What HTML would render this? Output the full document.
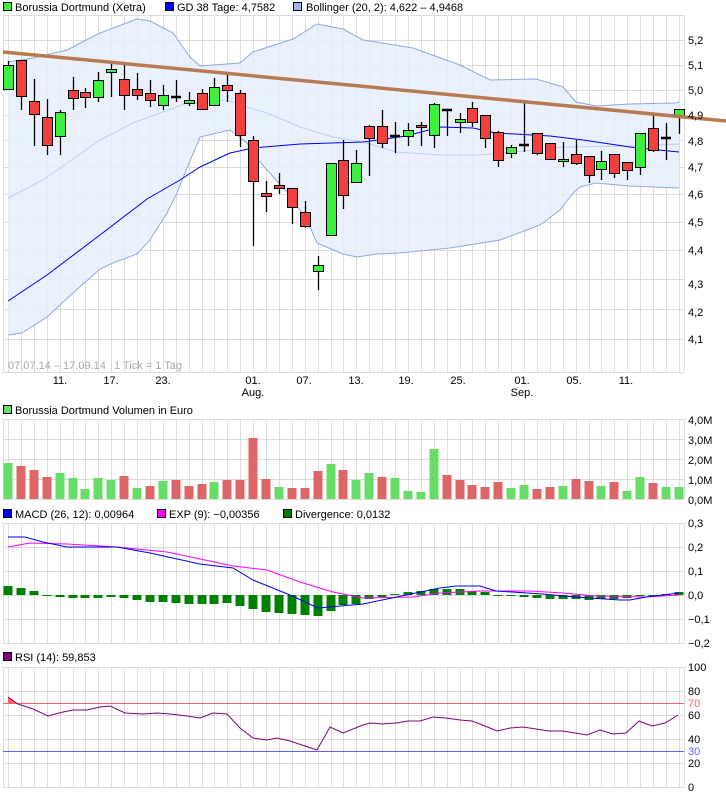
<!DOCTYPE html>
<html><head><meta charset="utf-8"><style>
body{margin:0;background:#fff;width:726px;height:796px;overflow:hidden}
svg{display:block}
text{font-family:"Liberation Sans",sans-serif;font-size:11px;fill:#000}
</style></head><body>
<svg width="726" height="796" viewBox="0 0 726 796" xmlns="http://www.w3.org/2000/svg">
<defs>
<g id="vg" stroke="#dcdcdc" stroke-width="1">
<path d="M8.5 0V1M21.5 0V1M34.5 0V1M47.5 0V1M60.5 0V1M73.5 0V1M85.5 0V1M98.5 0V1M111.5 0V1M124.5 0V1M137.5 0V1M150.5 0V1M163.5 0V1M176.5 0V1M189.5 0V1M202.5 0V1M214.5 0V1M227.5 0V1M240.5 0V1M253.5 0V1M266.5 0V1M279.5 0V1M292.5 0V1M305.5 0V1M318.5 0V1M331.5 0V1M343.5 0V1M356.5 0V1M369.5 0V1M382.5 0V1M395.5 0V1M408.5 0V1M421.5 0V1M434.5 0V1M447.5 0V1M460.5 0V1M472.5 0V1M485.5 0V1M498.5 0V1M511.5 0V1M524.5 0V1M537.5 0V1M550.5 0V1M563.5 0V1M576.5 0V1M589.5 0V1M601.5 0V1M614.5 0V1M627.5 0V1M640.5 0V1M653.5 0V1M666.5 0V1M679.5 0V1M3.5 0V1M684.5 0V1"/>
</g>
</defs>

<rect x="3.5" y="2.5" width="8" height="8" fill="#3ef03e" stroke="#000"/>
<text x="15" y="11">Borussia Dortmund (Xetra)</text>
<rect x="165.5" y="2.5" width="8" height="8" fill="#0000ff" stroke="#000"/>
<text x="177" y="11">GD 38 Tage: 4,7582</text>
<rect x="293.5" y="2.5" width="8" height="8" fill="#9db4e6" stroke="#000"/>
<text x="306" y="11">Bollinger (20, 2): 4,622 – 4,9468</text>

<use href="#vg" transform="translate(0,15) scale(1,357)"/>
<g stroke="#dcdcdc"><path d="M3 15.5H684M3 40.5H684M3 65.5H684M3 90.5H684M3 115.5H684M3 140.5H684M3 167.5H684M3 194.5H684M3 222.5H684M3 250.5H684M3 279.5H684M3 309.5H684M3 339.5H684M3 372.5H684"/></g>

<path fill="#e6eefb" fill-opacity="0.85" d="M8 62 L33 58 L67 50 L100 33 L137 19 L150 21 L173 33 L190 57 L200 66 L240 63 L253 52 L293 39 L317 24 L343 29 L363 40 L413 48 L460 65 L490 80 L536 79 L563 87 L576 102 L596 106 L630 104 L676 103 L679 102 L679 188 L630 186 L596 183 L580 187 L573 193 L560 210 L540 225 L500 240 L450 248 L400 253 L377 254 L357 257 L343 254 L317 243 L310 227 L300 210 L287 192 L258 160 L247 143 L230 130 L200 137 L182 180 L177 193 L167 213 L150 240 L137 254 L113 263 L100 269 L73 293 L47 317 L22 333 L8 335 Z"/>
<path fill="none" stroke="#8fa8e0" d="M8 62 L33 58 L67 50 L100 33 L137 19 L150 21 L173 33 L190 57 L200 66 L240 63 L253 52 L293 39 L317 24 L343 29 L363 40 L413 48 L460 65 L490 80 L536 79 L563 87 L576 102 L596 106 L630 104 L676 103 L679 102"/>
<path fill="none" stroke="#8fa8e0" d="M679 188 L630 186 L596 183 L580 187 L573 193 L560 210 L540 225 L500 240 L450 248 L400 253 L377 254 L357 257 L343 254 L317 243 L310 227 L300 210 L287 192 L258 160 L247 143 L230 130 L200 137 L182 180 L177 193 L167 213 L150 240 L137 254 L113 263 L100 269 L73 293 L47 317 L22 333 L8 335"/>
<path fill="none" stroke="#b9cff7" d="M8 198 L43 180 L100 140 L133 123 L187 103 L227 100 L247 107 L267 113 L300 127 L333 137 L363 142 L396 152 L440 155 L480 155 L513 152 L563 147 L630 146 L679 144"/>
<path fill="none" stroke="#0000ee" d="M8 301 L47 275 L100 235 L147 199 L180 180 L200 167 L230 153 L253 148 L300 144 L363 142 L406 136 L440 127 L473 128 L496 133 L550 136 L583 140 L630 147 L679 152"/>

<g stroke="#000" stroke-width="1.3">
<path d="M8.5 61V89M21.5 60V110M34.5 79V146M47.5 99V155M60.5 110V155M73.5 77V110M85.5 88V108M98.5 72V102M111.5 62V97M124.5 65V110M137.5 73V100M150.5 80V107M163.5 85V110M176.5 80V102M189.5 92V106M202.5 89V109M214.5 78V106M227.5 75V102M240.5 90V147M253.5 136V246M266.5 181V212M279.5 173V194M292.5 188V224M305.5 201V228M318.5 256V290M331.5 163V235M343.5 140V209M356.5 150V182M369.5 125V176M382.5 110V148M395.5 122V153M408.5 123V146M421.5 122V146M434.5 103V148M447.5 110V136M460.5 113V133M472.5 102V127M485.5 115V148M498.5 131V167M511.5 145V158M524.5 103V152M537.5 133V155M550.5 143V160M563.5 142V167M576.5 140V165M589.5 156V183M601.5 151V180M614.5 154V178M627.5 162V180M640.5 133V175M653.5 114V152M666.5 123V160M679.5 109V134"/>
</g>
<g stroke="#000" stroke-width="1">
<g fill="#3ef03e">
<rect x="3.5" y="65.5" width="10" height="24"/>
<rect x="55.5" y="112.5" width="10" height="24"/>
<rect x="93.5" y="80.5" width="10" height="17"/>
<rect x="106.5" y="69.5" width="10" height="3"/>
<rect x="158.5" y="95.5" width="10" height="10"/>
<rect x="184.5" y="100.5" width="10" height="3"/>
<rect x="209.5" y="87.5" width="10" height="18"/>
<rect x="313.5" y="265.5" width="10" height="6"/>
<rect x="326.5" y="163.5" width="10" height="72"/>
<rect x="351.5" y="163.5" width="10" height="19"/>
<rect x="403.5" y="130.5" width="10" height="6"/>
<rect x="429.5" y="104.5" width="10" height="31"/>
<rect x="455.5" y="119.5" width="10" height="3"/>
<rect x="506.5" y="147.5" width="10" height="6"/>
<rect x="558.5" y="159.5" width="10" height="2"/>
<rect x="596.5" y="161.5" width="10" height="8"/>
<rect x="635.5" y="133.5" width="10" height="34"/>
<rect x="674.5" y="109.5" width="10" height="7"/>
</g>
<g fill="#f04040">
<rect x="16.5" y="60.5" width="10" height="36"/>
<rect x="29.5" y="101.5" width="10" height="13"/>
<rect x="42.5" y="117.5" width="10" height="28"/>
<rect x="68.5" y="90.5" width="10" height="8"/>
<rect x="80.5" y="92.5" width="10" height="5"/>
<rect x="119.5" y="79.5" width="10" height="16"/>
<rect x="132.5" y="89.5" width="10" height="6"/>
<rect x="145.5" y="93.5" width="10" height="7"/>
<rect x="197.5" y="93.5" width="10" height="16"/>
<rect x="222.5" y="85.5" width="10" height="5"/>
<rect x="235.5" y="93.5" width="10" height="42"/>
<rect x="248.5" y="140.5" width="10" height="41"/>
<rect x="261.5" y="193.5" width="10" height="3"/>
<rect x="274.5" y="185.5" width="10" height="3"/>
<rect x="287.5" y="188.5" width="10" height="19"/>
<rect x="300.5" y="212.5" width="10" height="14"/>
<rect x="338.5" y="160.5" width="10" height="35"/>
<rect x="364.5" y="126.5" width="10" height="12"/>
<rect x="377.5" y="126.5" width="10" height="17"/>
<rect x="416.5" y="125.5" width="10" height="2"/>
<rect x="467.5" y="108.5" width="10" height="14"/>
<rect x="480.5" y="115.5" width="10" height="23"/>
<rect x="493.5" y="132.5" width="10" height="28"/>
<rect x="532.5" y="133.5" width="10" height="20"/>
<rect x="545.5" y="143.5" width="10" height="16"/>
<rect x="571.5" y="154.5" width="10" height="9"/>
<rect x="584.5" y="156.5" width="10" height="19"/>
<rect x="609.5" y="154.5" width="10" height="19"/>
<rect x="622.5" y="162.5" width="10" height="8"/>
<rect x="648.5" y="128.5" width="10" height="22"/>
</g>
</g>
<g stroke="#000" stroke-width="2.5"><path d="M171 97H181M390 136H400M442 110H452M519 145H529M661 138H671"/></g>

<path d="M3 52 L726 121" stroke="#b97a52" stroke-width="3.5" fill="none"/>

<text x="8" y="369" style="fill:#a8a8a8">07.07.14 – 17.09.14</text>
<text x="114" y="369" style="fill:#a8a8a8">1 Tick = 1 Tag</text>
<g text-anchor="middle">
<text x="60" y="384">11.</text><text x="111" y="384">17.</text><text x="163" y="384">23.</text>
<text x="253" y="384">01.</text><text x="253" y="396">Aug.</text>
<text x="304" y="384">07.</text><text x="356" y="384">13.</text><text x="406" y="384">19.</text>
<text x="458" y="384">25.</text><text x="522" y="384">01.</text><text x="522" y="396">Sep.</text>
<text x="574" y="384">05.</text><text x="626" y="384">11.</text>
</g>
<g>
<text x="688" y="44">5,2</text><text x="688" y="69">5,1</text><text x="688" y="94">5,0</text>
<text x="688" y="119">4,9</text><text x="688" y="145">4,8</text><text x="688" y="171">4,7</text>
<text x="688" y="198">4,6</text><text x="688" y="226">4,5</text><text x="688" y="254">4,4</text>
<text x="688" y="288">4,3</text><text x="688" y="316">4,2</text><text x="688" y="343">4,1</text>
</g>

<rect x="3.5" y="405.5" width="8" height="8" fill="#66dd66" stroke="#000"/>
<text x="15" y="414">Borussia Dortmund Volumen in Euro</text>
<use href="#vg" transform="translate(0,419) scale(1,80)"/>
<g stroke="#dcdcdc"><path d="M3 419.5H684M3 439.5H684M3 459.5H684M3 479.5H684M3 499.5H684"/></g>
<g fill="#66dd66">
<rect x="3.5" y="463" width="9" height="36"/><rect x="55.5" y="473" width="9" height="26"/><rect x="68.5" y="478" width="9" height="21"/><rect x="80.5" y="489" width="9" height="10"/><rect x="93.5" y="478" width="9" height="21"/><rect x="106.5" y="480" width="9" height="19"/><rect x="132.5" y="488" width="9" height="11"/><rect x="158.5" y="481" width="9" height="18"/><rect x="209.5" y="482" width="9" height="17"/><rect x="274.5" y="487" width="9" height="12"/><rect x="326.5" y="464" width="9" height="35"/><rect x="351.5" y="480" width="9" height="19"/><rect x="364.5" y="473" width="9" height="26"/><rect x="390.5" y="478" width="9" height="21"/><rect x="403.5" y="491" width="9" height="8"/><rect x="416.5" y="492" width="9" height="7"/><rect x="429.5" y="449" width="9" height="50"/><rect x="506.5" y="488" width="9" height="11"/><rect x="519.5" y="485" width="9" height="14"/><rect x="558.5" y="486" width="9" height="13"/><rect x="596.5" y="486" width="9" height="13"/><rect x="622.5" y="491" width="9" height="8"/><rect x="635.5" y="477" width="9" height="22"/><rect x="661.5" y="487" width="9" height="12"/><rect x="674.5" y="487" width="9" height="12"/>
</g>
<g fill="#dd6666">
<rect x="16.5" y="466" width="9" height="33"/><rect x="29.5" y="470" width="9" height="29"/><rect x="42.5" y="477" width="9" height="22"/><rect x="119.5" y="476" width="9" height="23"/><rect x="145.5" y="486" width="9" height="13"/><rect x="171.5" y="480" width="9" height="19"/><rect x="184.5" y="486" width="9" height="13"/><rect x="197.5" y="484" width="9" height="15"/><rect x="222.5" y="480" width="9" height="19"/><rect x="235.5" y="480" width="9" height="19"/><rect x="248.5" y="438" width="9" height="61"/><rect x="261.5" y="479" width="9" height="20"/><rect x="287.5" y="488" width="9" height="11"/><rect x="300.5" y="488" width="9" height="11"/><rect x="313.5" y="471" width="9" height="28"/><rect x="338.5" y="470" width="9" height="29"/><rect x="377.5" y="477" width="9" height="22"/><rect x="442.5" y="475" width="9" height="24"/><rect x="455.5" y="480" width="9" height="19"/><rect x="467.5" y="485" width="9" height="14"/><rect x="480.5" y="487" width="9" height="12"/><rect x="493.5" y="482" width="9" height="17"/><rect x="532.5" y="489" width="9" height="10"/><rect x="545.5" y="487" width="9" height="12"/><rect x="571.5" y="479" width="9" height="20"/><rect x="584.5" y="481" width="9" height="18"/><rect x="609.5" y="482" width="9" height="17"/><rect x="648.5" y="483" width="9" height="16"/>
</g>
<g><text x="688" y="424">4,0M</text><text x="688" y="444">3,0M</text><text x="688" y="464">2,0M</text><text x="688" y="484">1,0M</text><text x="688" y="504">0,0M</text></g>

<rect x="3.5" y="509.5" width="8" height="8" fill="#0000ff" stroke="#000"/>
<text x="15" y="518">MACD (26, 12): 0,00964</text>
<rect x="157.5" y="509.5" width="8" height="8" fill="#ff00ff" stroke="#000"/>
<text x="169" y="518">EXP (9): −0,00356</text>
<rect x="283.5" y="509.5" width="8" height="8" fill="#008000" stroke="#000"/>
<text x="295" y="518">Divergence: 0,0132</text>
<use href="#vg" transform="translate(0,523) scale(1,120)"/>
<g stroke="#dcdcdc"><path d="M3 523.5H684M3 547.5H684M3 571.5H684M3 595.5H684M3 619.5H684M3 643.5H684"/></g>
<g fill="#008000">
<rect x="3.5" y="586" width="9" height="9"/><rect x="16.5" y="588" width="9" height="7"/><rect x="29.5" y="591" width="9" height="4"/><rect x="42.5" y="595" width="9" height="1"/><rect x="55.5" y="595" width="9" height="2"/><rect x="68.5" y="595" width="9" height="3"/><rect x="80.5" y="595" width="9" height="3"/><rect x="93.5" y="595" width="9" height="3"/><rect x="106.5" y="595" width="9" height="2"/><rect x="119.5" y="595" width="9" height="3"/><rect x="132.5" y="595" width="9" height="5"/><rect x="145.5" y="595" width="9" height="7"/><rect x="158.5" y="595" width="9" height="7"/><rect x="171.5" y="595" width="9" height="8"/><rect x="184.5" y="595" width="9" height="9"/><rect x="197.5" y="595" width="9" height="9"/><rect x="209.5" y="595" width="9" height="9"/><rect x="222.5" y="595" width="9" height="8"/><rect x="235.5" y="595" width="9" height="11"/><rect x="248.5" y="595" width="9" height="14"/><rect x="261.5" y="595" width="9" height="17"/><rect x="274.5" y="595" width="9" height="18"/><rect x="287.5" y="595" width="9" height="19"/><rect x="300.5" y="595" width="9" height="20"/><rect x="313.5" y="595" width="9" height="21"/><rect x="326.5" y="595" width="9" height="16"/><rect x="338.5" y="595" width="9" height="10"/><rect x="351.5" y="595" width="9" height="9"/><rect x="364.5" y="595" width="9" height="4"/><rect x="377.5" y="595" width="9" height="2"/><rect x="390.5" y="594" width="9" height="1"/><rect x="403.5" y="592" width="9" height="3"/><rect x="416.5" y="591" width="9" height="4"/><rect x="429.5" y="589" width="9" height="6"/><rect x="442.5" y="589" width="9" height="6"/><rect x="455.5" y="589" width="9" height="6"/><rect x="467.5" y="591" width="9" height="4"/><rect x="480.5" y="592" width="9" height="3"/><rect x="493.5" y="595" width="9" height="1"/><rect x="506.5" y="595" width="9" height="1"/><rect x="519.5" y="595" width="9" height="2"/><rect x="532.5" y="595" width="9" height="3"/><rect x="545.5" y="595" width="9" height="4"/><rect x="558.5" y="595" width="9" height="4"/><rect x="571.5" y="595" width="9" height="4"/><rect x="584.5" y="595" width="9" height="5"/><rect x="596.5" y="595" width="9" height="4"/><rect x="609.5" y="595" width="9" height="4"/><rect x="622.5" y="595" width="9" height="3"/><rect x="635.5" y="595" width="9" height="1"/><rect x="648.5" y="595" width="9" height="1"/><rect x="661.5" y="594" width="9" height="1"/><rect x="674.5" y="592" width="9" height="3"/>
</g>
<path fill="none" stroke="#ff00ff" d="M8 547 L30 543 L67 544 L117 547 L167 552 L233 566 L267 570 L300 582 L333 592 L363 598 L413 597 L440 593 L480 591 L530 591 L563 593 L596 596 L646 597 L679 595"/>
<path fill="none" stroke="#0000ee" d="M8 537 L25 537 L43 542 L67 547 L117 547 L150 553 L200 564 L233 568 L253 580 L290 595 L318 608 L363 604 L406 595 L440 588 L456 586 L480 586 L496 591 L543 594 L563 596 L590 598 L620 600 L630 600 L646 597 L679 593"/>
<g><text x="688" y="527">0,3</text><text x="688" y="551">0,2</text><text x="688" y="575">0,1</text><text x="688" y="599">0,0</text><text x="688" y="623">−0,1</text><text x="688" y="647">−0,2</text></g>

<rect x="3.5" y="652.5" width="8" height="8" fill="#800080" stroke="#000"/>
<text x="15" y="661">RSI (14): 59,853</text>
<use href="#vg" transform="translate(0,667) scale(1,120)"/>
<g stroke="#dcdcdc"><path d="M3 667.5H684M3 691.5H684M3 715.5H684M3 739.5H684M3 763.5H684M3 787.5H684"/></g>
<path d="M3 703.5H684" stroke="#ff6060"/>
<path d="M3 751.5H684" stroke="#6060ff"/>
<path d="M8 697 L18 703.5 L8 703.5Z" fill="#ff6060"/>
<path fill="none" stroke="#800080" d="M8 697 L18 704 L33 709 L48 716 L63 712 L73 710 L87 710 L100 707 L110 706 L125 713 L143 714 L157 713 L170 714 L187 716 L200 718 L213 713 L227 714 L240 728 L253 738 L267 740 L277 738 L290 741 L317 750 L330 727 L343 733 L363 725 L370 723 L382 724 L396 723 L408 721 L420 721 L433 717 L446 718 L460 720 L472 721 L485 726 L497 731 L510 728 L523 727 L536 729 L549 731 L562 731 L575 733 L587 735 L600 730 L613 734 L626 733 L639 721 L652 726 L665 723 L678 715"/>
<g><text x="688" y="671">100</text><text x="688" y="695">80</text><text x="688" y="707" style="fill:#ff6060">70</text><text x="688" y="719">60</text><text x="688" y="743">40</text><text x="688" y="755" style="fill:#6060ff">30</text><text x="688" y="767">20</text><text x="688" y="791">0</text></g>
</svg>
</body></html>
